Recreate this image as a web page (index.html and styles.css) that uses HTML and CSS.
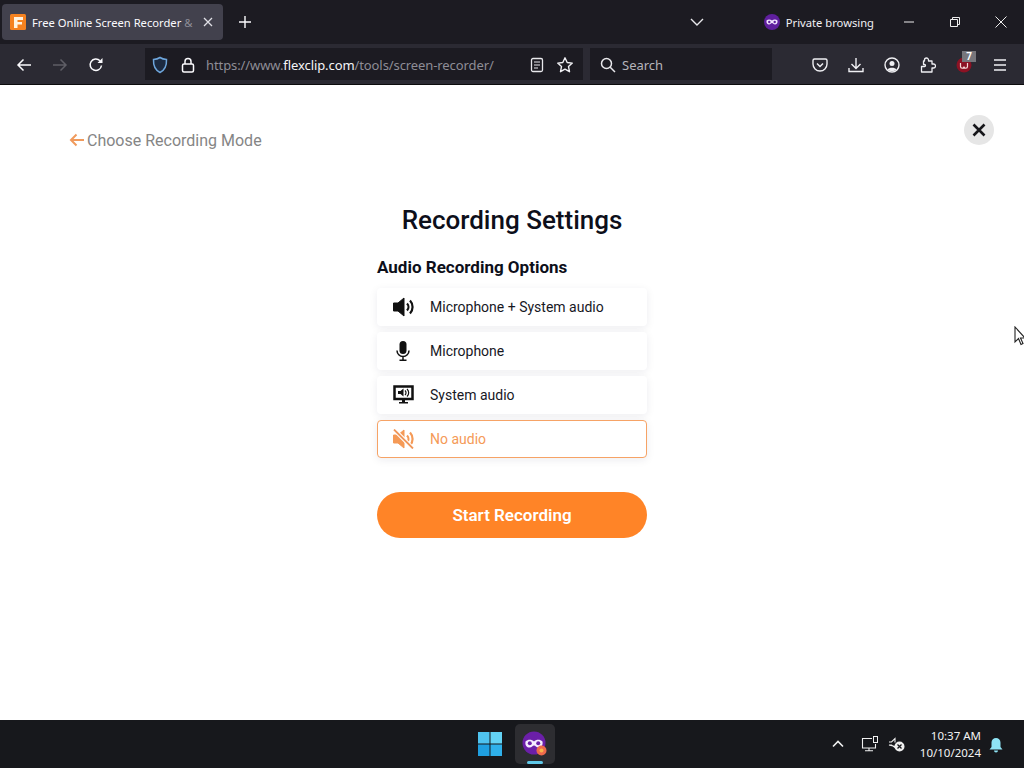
FILE: index.html
```html
<!DOCTYPE html>
<html lang="en">
<head>
<meta charset="utf-8">
<title>Recording Settings</title>
<link rel="stylesheet" href="styles.css">
</head>
<body>
<div class="screen">
  <header class="tabbar">
    <div class="tab">
      <svg class="favicon" width="16" height="16" viewBox="0 0 16 16"><rect width="16" height="16" rx="1.500" fill="#f58220"/><path d="M4 3h9v3H7.500v2H12v2.600H7.500V14H4z" fill="#fff3e0"/></svg>
      <span class="tab-title">Free Online Screen Recorder <span class="fade">&amp;</span></span>
      <svg class="tab-close" width="10" height="10" viewBox="0 0 10 10"><path d="M1 1l8 8M9 1l-8 8" stroke="#e0e0e6" stroke-width="1.300"/></svg>
    </div>
    <svg class="newtab" width="14" height="14" viewBox="0 0 14 14"><path d="M7 1v12M1 7h12" stroke="#fbfbfe" stroke-width="1.400"/></svg>
    <div class="spacer"></div>
    <svg class="tablist" width="14" height="8" viewBox="0 0 14 8"><path d="M1 1l6 6 6-6" fill="none" stroke="#e8e8ec" stroke-width="1.400"/></svg>
    <div class="private">
      <svg width="16" height="16" viewBox="0 0 16 16"><circle cx="8" cy="8" r="8" fill="#5f1f9e"/><path d="M2.500 6.500C4 5 6.500 5.300 8 6.500 9.500 5.300 12 5 13.500 6.500c.5 2.500-1 4-2.500 4S9 9 8 9s-1.500 1.500-3 1.500-3-1.500-2.500-4z" fill="#f2e6ff"/><circle cx="5.300" cy="8" r="1.200" fill="#5f1f9e"/><circle cx="10.700" cy="8" r="1.200" fill="#5f1f9e"/></svg>
      <span>Private browsing</span>
    </div>
    <div class="winctl">
      <svg width="12" height="12" viewBox="0 0 12 12"><path d="M1 6h10" stroke="#eee" stroke-width="1"/></svg>
      <svg width="12" height="12" viewBox="0 0 12 12"><path d="M1.500 3.500h7v7h-7zM3.500 3.500v-2h7v7h-2" fill="none" stroke="#eee" stroke-width="1"/></svg>
      <svg width="12" height="12" viewBox="0 0 12 12"><path d="M.5.500l11 11M11.500.500l-11 11" stroke="#eee" stroke-width="1"/></svg>
    </div>
  </header>

  <nav class="toolbar">
    <div class="nav-btns">
      <svg width="16" height="16" viewBox="0 0 16 16"><path d="M15 8H2M7.500 2.500L2 8l5.500 5.500" fill="none" stroke="#fbfbfe" stroke-width="1.500"/></svg>
      <svg width="16" height="16" viewBox="0 0 16 16"><path d="M1 8h13M8.500 2.500L14 8l-5.500 5.500" fill="none" stroke="#5f5e66" stroke-width="1.500"/></svg>
      <svg width="16" height="16" viewBox="0 0 16 16"><path d="M13.500 8.500A5.700 5.700 0 1 1 12 3.800" fill="none" stroke="#fbfbfe" stroke-width="1.500"/><path d="M14.500 1v5h-5z" fill="#fbfbfe"/></svg>
    </div>
    <div class="urlbar">
      <svg width="16" height="18" viewBox="0 0 16 18"><path d="M8 1.500c2 1.300 4 1.800 6.500 2 .3 6-1.500 10.500-6.500 13-5-2.500-6.800-7-6.500-13 2.500-.2 4.500-.7 6.500-2z" fill="#1c2a40" stroke="#6ea6dc" stroke-width="1.500"/></svg>
      <svg class="lock" width="14" height="16" viewBox="0 0 14 16"><rect x="1.500" y="7" width="11" height="8" rx="1.500" fill="none" stroke="#fbfbfe" stroke-width="1.500"/><path d="M4 7V4.500a3 3 0 0 1 6 0V7" fill="none" stroke="#fbfbfe" stroke-width="1.500"/></svg>
      <span class="url"><span class="dim">https://www.</span>flexclip.com<span class="dim">/tools/screen-recorder/</span></span>
      <svg class="reader" width="14" height="16" viewBox="0 0 14 16"><rect x="1.500" y="1.500" width="11" height="13" rx="1.500" fill="none" stroke="#e8e8ec" stroke-width="1.300"/><path d="M4 5h6M4 8h6M4 11h4" stroke="#e8e8ec" stroke-width="1.200"/></svg>
      <svg width="18" height="18" viewBox="0 0 18 18"><path d="M9 1.800l2.200 4.700 5.100.6-3.800 3.500 1 5.100L9 13.200l-4.500 2.500 1-5.100L1.700 7.100l5.100-.6z" fill="none" stroke="#f0f0f4" stroke-width="1.400" stroke-linejoin="round"/></svg>
    </div>
    <div class="searchbar">
      <svg width="16" height="16" viewBox="0 0 16 16"><circle cx="6.500" cy="6.500" r="5" fill="none" stroke="#e8e8ec" stroke-width="1.500"/><path d="M10.200 10.200L15 15" stroke="#e8e8ec" stroke-width="1.500"/></svg>
      <span>Search</span>
    </div>
    <div class="tools">
      <svg width="16" height="16" viewBox="0 0 16 16"><path d="M2.500 2h11A1.500 1.500 0 0 1 15 3.500V7A7 7 0 0 1 1 7V3.500A1.500 1.500 0 0 1 2.500 2z" fill="none" stroke="#f0f0f4" stroke-width="1.400"/><path d="M5 6.500L8 9.500l3-3" fill="none" stroke="#f0f0f4" stroke-width="1.500"/></svg>
      <svg width="16" height="16" viewBox="0 0 16 16"><path d="M8 1v10M3.500 7L8 11.500 12.500 7M1 11v3.500h14V11" fill="none" stroke="#f0f0f4" stroke-width="1.400"/></svg>
      <svg width="16" height="16" viewBox="0 0 16 16"><circle cx="8" cy="8" r="7" fill="none" stroke="#f0f0f4" stroke-width="1.400"/><circle cx="8" cy="6.500" r="2.500" fill="#f0f0f4"/><path d="M3.500 12.500C5 10 11 10 12.500 12.500 11 14.500 5 14.500 3.500 12.500z" fill="#f0f0f4"/></svg>
      <svg width="16" height="16" viewBox="0 0 16 16"><path d="M1.500 9.500v5.500h10.500v-4h1.500a2 2 0 0 0 0-4H12V4H8.500V3a2 2 0 0 0-4 0v1H3.500v3.500h1a1 1 0 0 1 0 2z" fill="none" stroke="#f0f0f4" stroke-width="1.300" stroke-linejoin="round"/></svg>
      <div class="ublock">
        <svg width="16" height="16" viewBox="0 0 16 16"><circle cx="8" cy="8" r="7.500" fill="#8c1224"/><path d="M4.500 6v3.500a1.500 1.500 0 0 0 3.500 0 1.500 1.500 0 0 0 3.500 0V6" fill="none" stroke="#f4d8d8" stroke-width="1.200"/></svg>
        <span class="badge">7</span>
      </div>
      <svg width="16" height="16" viewBox="0 0 16 16"><path d="M2 3h12M2 8h12M2 13h12" stroke="#f0f0f4" stroke-width="1.500"/></svg>
    </div>
  </nav>

  <main class="page">
    <a class="back">
      <svg width="16" height="16" viewBox="0 0 16 16"><path d="M15 8H2M7.500 2.500L2 8l5.500 5.500" fill="none" stroke="#f09a5c" stroke-width="2"/></svg>
      <span>Choose Recording Mode</span>
    </a>
    <button class="close" aria-label="Close">
      <svg width="14" height="14" viewBox="0 0 14 14"><path d="M1.500 1.500l11 11M12.500 1.500l-11 11" stroke="#16161a" stroke-width="2.600"/></svg>
    </button>
    <section class="panel">
      <h1>Recording Settings</h1>
      <h2>Audio Recording Options</h2>
      <ul class="options">
        <li class="option">
          <svg width="24" height="20" viewBox="0 0 24 20"><path d="M2.500 6h4.500L13 1v18l-6-5H2.500z" fill="#111" stroke="#111"/><path d="M16 6.500a5 5 0 0 1 0 7M19 3.500a9.500 9.500 0 0 1 0 13" fill="none" stroke="#111" stroke-width="2.200"/></svg>
          <span>Microphone + System audio</span>
        </li>
        <li class="option">
          <svg class="mic" width="24" height="20" viewBox="0 0 24 20"><rect x="8.500" y="0" width="7" height="13" rx="3.500" fill="#111"/><path d="M6 9.500a6 6 0 0 0 12 0M12 15.500V19M8.500 19.200h7" fill="none" stroke="#111" stroke-width="1.500"/></svg>
          <span>Microphone</span>
        </li>
        <li class="option">
          <svg width="24" height="20" viewBox="0 0 24 20"><rect x="3.500" y="1.500" width="18" height="12.500" fill="none" stroke="#111" stroke-width="2.500"/><path d="M7 6h2.500l3-2.500v8l-3-2.500H7z" fill="#111"/><path d="M14 5.500a3 3 0 0 1 0 4.500M16 4a5 5 0 0 1 0 7.500" fill="none" stroke="#111" stroke-width="1.200"/><path d="M11 15h3v2H17v1.500H8V17h3z" fill="#111"/></svg>
          <span>System audio</span>
        </li>
        <li class="option selected">
          <svg width="24" height="20" viewBox="0 0 24 20"><path d="M2.500 6h4.500L13 1v18l-6-5H2.500z" fill="#f59a57" stroke="#f59a57"/><path d="M16 6.500a5 5 0 0 1 0 7M19 3.500a9.500 9.500 0 0 1 0 13" fill="none" stroke="#f59a57" stroke-width="2.200"/><path d="M3 .5L22 19.500" stroke="#fff" stroke-width="4"/><path d="M3 .5L22 19.500" stroke="#f0965a" stroke-width="1.800"/></svg>
          <span>No audio</span>
        </li>
      </ul>
      <button class="start">Start Recording</button>
    </section>
    <svg class="pointer" width="12" height="20" viewBox="0 0 12 20"><path d="M1 1v15l3.500-3.500 2.500 6 2-1-2.500-5.500H11z" fill="#fff" stroke="#222" stroke-width="1.100"/></svg>
  </main>

  <footer class="taskbar">
    <div class="task-center">
      <div class="task-item">
        <svg width="24" height="24" viewBox="0 0 24 24"><path d="M0 0h11.500v11.500H0z" fill="#4fc3ef"/><path d="M12.500 0H24v11.500H12.500z" fill="#63d3f5"/><path d="M0 12.500h11.500V24H0z" fill="#1f9fe0"/><path d="M12.500 12.500H24V24H12.500z" fill="#2fb0ea"/></svg>
      </div>
      <div class="task-item active">
        <svg width="26" height="26" viewBox="0 0 26 26"><circle cx="12" cy="12" r="11.500" fill="#6b1fa8"/><path d="M3.500 10.500C6 8 10 8.500 12 10.500 14 8.500 18 8 20.500 10.500c.7 4-1.500 6-4 6S13.500 14.500 12 14.500 10 16.500 7.500 16.500s-4.700-2-4-6z" fill="#f5ecff"/><circle cx="7.800" cy="12.300" r="2" fill="#6b1fa8"/><circle cx="16.200" cy="12.300" r="2" fill="#6b1fa8"/><circle cx="19.500" cy="19.500" r="5" fill="#ef6a4c"/><circle cx="19.500" cy="19.500" r="2" fill="#f7b44a"/></svg>
        <span class="running"></span>
      </div>
    </div>
    <div class="tray">
      <svg class="tray-up" width="12" height="8" viewBox="0 0 12 8"><path d="M1 6.500l5-5 5 5" fill="none" stroke="#f0f0f0" stroke-width="1.600"/></svg>
      <svg class="tray-net" width="18" height="16" viewBox="0 0 18 16"><path d="M11 2.500H1.500v9.500h13V8M8 12v2.500M4 14.800h8" fill="none" stroke="#f0f0f0" stroke-width="1.100"/><rect x="12.500" y=".5" width="4" height="6" fill="none" stroke="#f0f0f0"/></svg>
      <svg class="tray-vol" width="17" height="15" viewBox="0 0 17 15"><path d="M1 5h2.500L7 1.500v4M7 9.500v1L3.500 8H1z" fill="none" stroke="#f0f0f0" stroke-width="1.100"/><circle cx="11.500" cy="9.500" r="5" fill="#f0f0f0"/><path d="M9.500 7.500l4 4M13.500 7.500l-4 4" stroke="#17181c" stroke-width="1.300"/></svg>
      <div class="clock"><span>10:37 AM</span><span>10/10/2024</span></div>
      <svg class="bell" width="14" height="16" viewBox="0 0 14 16"><path d="M7 1a4.500 4.500 0 0 1 4.500 4.500V10l2 2.500H.5l2-2.500V5.500A4.500 4.500 0 0 1 7 1z" fill="#8fe4f5"/><path d="M5 13.500a2 2 0 0 0 4 0z" fill="#8fe4f5"/></svg>
    </div>
  </footer>
</div>
</body>
</html>
```
FILE: styles.css
```css
* { box-sizing: border-box; }
html, body { margin: 0; padding: 0; height: 100%; overflow: hidden; }
body { font-family: Roboto, "Liberation Sans", sans-serif; background: #fff; }
svg { display: block; flex: none; }
.screen { width: 1024px; height: 768px; display: flex; flex-direction: column; }

.tabbar { height: 44px; background: #1c1b22; display: flex; align-items: center; padding: 4px 0 0 2px; flex: none; font-family: "Noto Sans", "Open Sans", sans-serif; }
.tab { width: 221px; height: 36px; margin-top: -4px; background: #42414d; border-radius: 4px; display: flex; align-items: center; padding: 0 10px 0 8px; color: #fbfbfe; font-size: 11.200px; }
.tab-title { margin-left: 6px; width: 161px; white-space: nowrap; flex: none; }
.fade { color: #8f8e98; }
.tab-close { margin-left: 10px; }
.newtab { margin: -4px 0 0 15px; }
.spacer { flex: 1; }
.tablist { margin: -4px 60px 0 0; }
.private { display: flex; align-items: center; gap: 6px; color: #f0f0f4; font-size: 11.200px; margin: -4px 29px 0 0; }
.winctl { display: flex; gap: 34px; margin: -4px 17px 0 0; }

.toolbar { height: 41px; background: #2b2a33; border-bottom: 1px solid #0c0c0d; display: flex; align-items: center; flex: none; padding: 2px 0 0 16px; }
.nav-btns { display: flex; gap: 20px; width: 129px; }
.urlbar { width: 438px; height: 32px; margin-top: -2px; padding: 2px 0 0 7px; background: #1c1b22; display: flex; align-items: center; }
.lock { margin-left: 13px; }
.url { margin-left: 11px; width: 324px; flex: none; font-size: 13px; letter-spacing: -0.09px; color: #f4f4f7; white-space: nowrap; font-family: "Noto Sans", sans-serif; }
.dim { color: #8e8d96; }
.reader { margin-right: 12px; }
.searchbar { width: 182px; height: 32px; margin: -2px 0 0 7px; background: #1c1b22; display: flex; align-items: center; gap: 6px; padding: 2px 0 0 10px; color: #b5b4bb; font-size: 13px; font-family: "Noto Sans", sans-serif; }
.tools { display: flex; align-items: center; gap: 20px; margin-left: 40px; }
.ublock { position: relative; }
.badge { position: absolute; right: -4px; top: -6px; width: 14px; height: 11px; background: #77767c; color: #fff; font-size: 10px; line-height: 11px; text-align: center; font-weight: 700; }

.page { flex: 1; position: relative; background: #fff; display: flex; flex-direction: column; align-items: center; }
.back { align-self: flex-start; display: flex; align-items: center; margin: 43px 0 0 69px; height: 24px; font-size: 16px; color: #858585; }
.back span { margin-left: 2px; }
.close { position: absolute; right: 30px; top: 30px; width: 30px; height: 30px; border-radius: 50%; background: #e6e6e6; border: 0; padding: 0; display: flex; align-items: center; justify-content: center; }
.panel { width: 270px; display: flex; flex-direction: column; margin-top: 51px; }
h1 { margin: 0; font-size: 26px; line-height: 34px; font-weight: 500; color: #0d0f1a; text-align: center; white-space: nowrap; }
h2 { margin: 18px 0 0; font-size: 17px; line-height: 24px; font-weight: 700; color: #0d0f1a; white-space: nowrap; }
.options { list-style: none; margin: 9px 0 0; padding: 0; display: flex; flex-direction: column; gap: 6px; }
.option { height: 38px; border-radius: 4px; background: #fff; box-shadow: 0 2px 8px rgba(20, 30, 60, 0.08); display: flex; align-items: center; padding: 0 0 0 14px; gap: 15px; font-size: 14px; color: #17181f; }
.option.selected { border: 1px solid #f6a366; color: #f59a57; padding-left: 13px; }
.start { margin-top: 34px; height: 46px; border: 0; border-radius: 23px; background: #ff8427; color: #fff; font: 600 17px Roboto, sans-serif; }
.pointer { position: absolute; right: -2px; top: 241px; }

.taskbar { height: 48px; background: #17181c; flex: none; position: relative; display: flex; align-items: center; justify-content: flex-end; color: #f2f2f2; font-family: "Noto Sans", sans-serif; }
.task-center { position: absolute; left: 470px; top: 4px; display: flex; gap: 0; }
.task-item { width: 40px; height: 40px; margin-right: 5px; display: flex; align-items: center; justify-content: center; border-radius: 5px; position: relative; }
.task-item.active { background: #2d2d31; }
.running { position: absolute; left: 12px; bottom: 0; width: 16px; height: 3px; border-radius: 2px; background: #5fc8e8; }
.tray { display: flex; align-items: center; }
.tray-up { margin-right: 17px; }
.tray-net { margin-right: 9px; }
.tray-vol { margin-right: 15px; }
.clock { display: flex; flex-direction: column; align-items: flex-end; font-size: 11.500px; line-height: 17px; }
.bell { margin: 2px 21px 0 8px; }
```
